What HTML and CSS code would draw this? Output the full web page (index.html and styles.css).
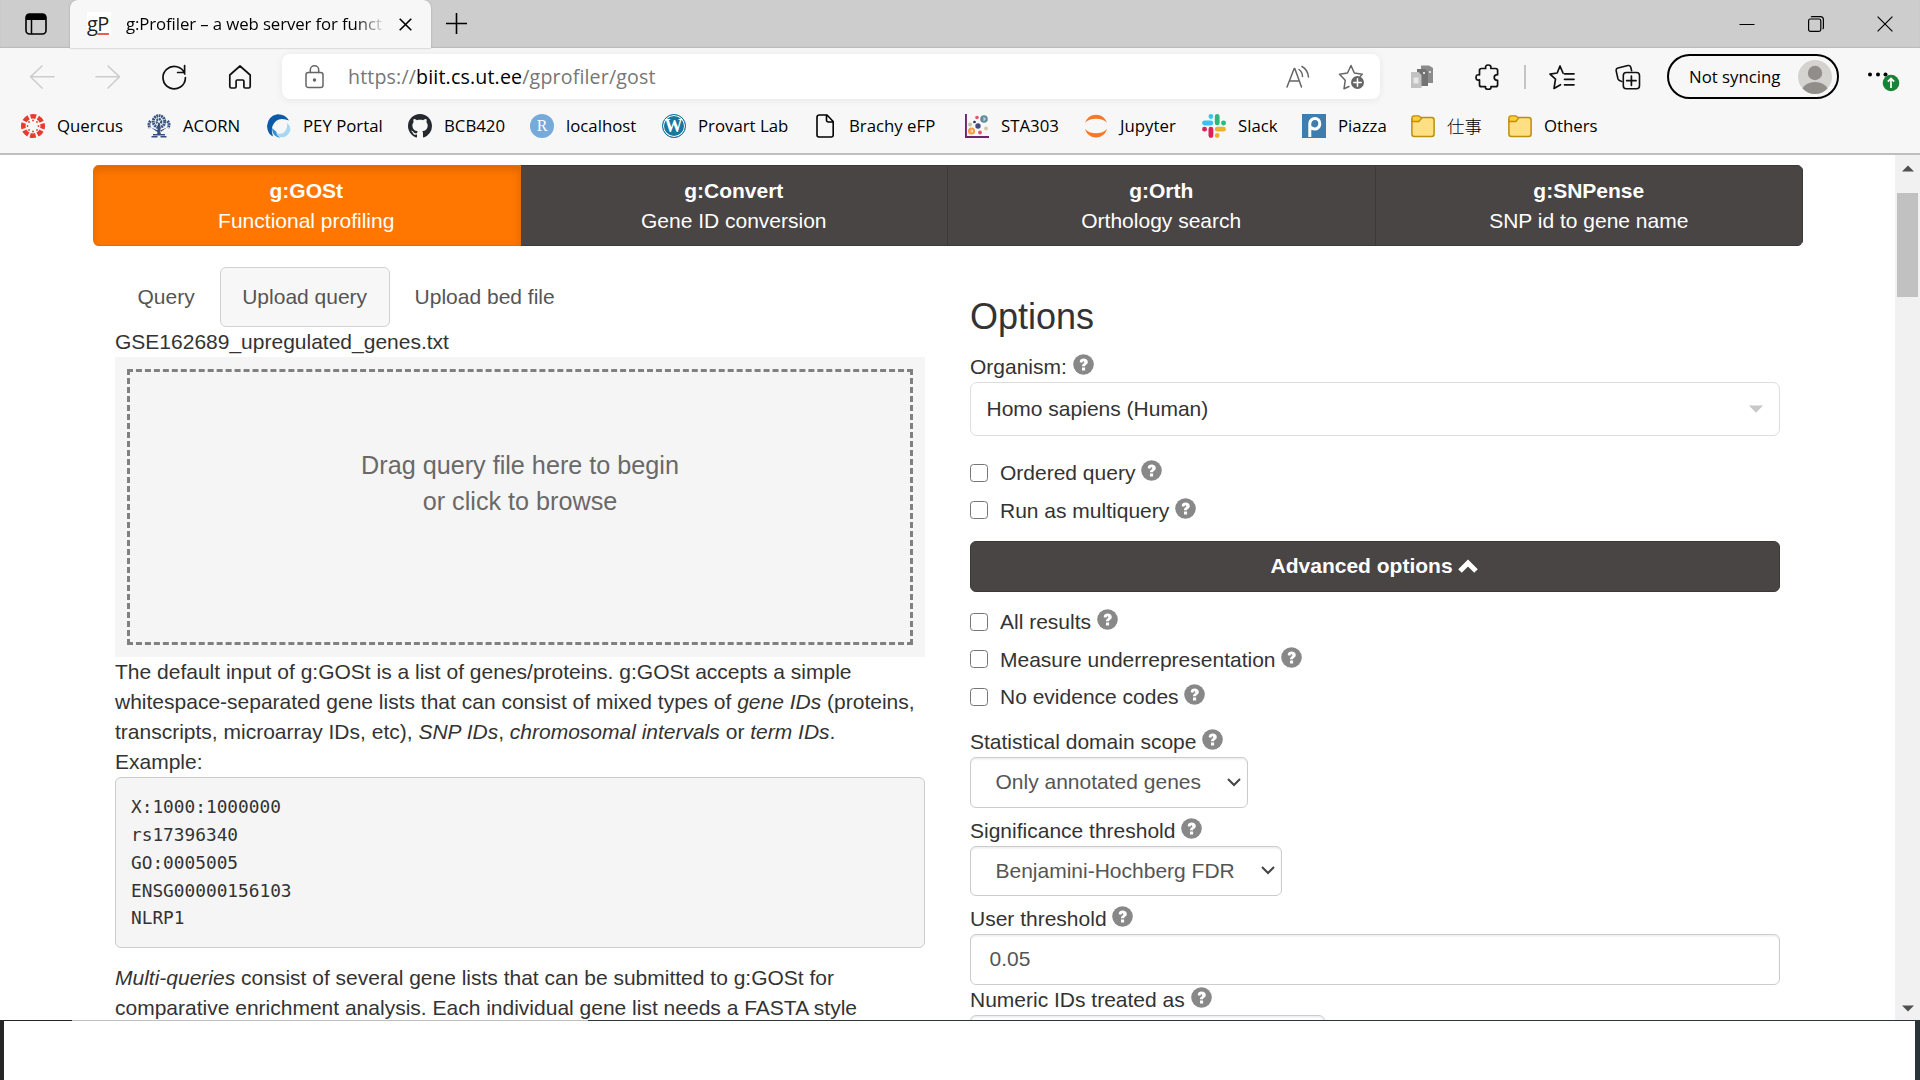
FILE: index.html
```html
<!DOCTYPE html>
<html lang="en">
<head>
<meta charset="utf-8">
<title>g:Profiler</title>
<link rel="stylesheet" href="styles.css">
</head>
<body>
<svg class="defs" width="0" height="0">
  <symbol id="help" viewBox="0 0 21 21">
    <circle cx="10.5" cy="10.5" r="10.3" fill="#888"/>
    <path d="M6.700 8.300C6.700 5.500 8.500 4.500 10.600 4.500c2.400 0 4.200 1.300 4.200 3.500 0 2.700-2.700 2.600-2.800 4.200H9c0-2.700 2.300-2.700 2.300-4 0-1.400-1.900-1.200-1.900.6z" fill="#fff"/>
    <rect x="9" y="13.500" width="3.100" height="3" fill="#fff"/>
  </symbol>
  <symbol id="folder" viewBox="0 0 24 24">
    <rect x=".9" y="3.600" width="22.200" height="18.800" rx="2.500" fill="#ffdf84" stroke="#bb8f0c" stroke-width="1.500"/>
    <path d="M1 7.500V4Q1 1.800 3 1.800h4.800L10.600 4.300 7.800 7.500z" fill="#ffd12e" stroke="#bb8f0c" stroke-width="1.300"/>
  </symbol>
</svg>

<header class="tabstrip">
  <svg class="workspace" viewBox="0 0 22 22"><rect x="1" y="1" width="20" height="20" rx="3.500" fill="none" stroke="#000" stroke-width="1.600"/><path d="M1 7V4Q1 1 4 1h14q3 0 3 3v3z"/><path d="M6.500 6v15" stroke="#000" stroke-width="1.500"/></svg>
  <div class="tab">
    <span class="gp">g<u>P</u></span>
    <span class="tab-title">g:Profiler – a web server for funct</span>
    <svg width="13" height="13" viewBox="0 0 13 13"><path d="M.7.7l11.600 11.600M12.300.7L.7 12.300" stroke="#000" stroke-width="1.600"/></svg>
  </div>
  <svg class="newtab" viewBox="0 0 21 21"><path d="M10.500 0v21M0 10.500h21" stroke="#000" stroke-width="1.600"/></svg>
  <div class="win">
    <svg viewBox="0 0 16 16"><path d="M.5 8.500h15" stroke="#000"/></svg>
    <svg viewBox="0 0 16 16"><rect x=".6" y="3" width="12.200" height="12.300" rx="1.800" fill="none" stroke="#000" stroke-width="1.200"/><path d="M3 1.200q.5-.6 1.300-.6H12.400q3 0 3 3v8q0 1-.7 1.400" fill="none" stroke="#000" stroke-width="1.200"/></svg>
    <svg viewBox="0 0 16 16"><path d="M.6.6l14.800 14.800M15.400.6L.6 15.400" stroke="#000" stroke-width="1.200"/></svg>
  </div>
</header>

<div class="toolbar">
  <svg class="ico faint" viewBox="0 0 26 26"><path d="M25 12.800H2M13 2L1.500 12.800 13 24"/></svg>
  <svg class="ico faint" viewBox="0 0 26 26"><path d="M1 12.800h23M13 2l11.500 10.800L13 24"/></svg>
  <svg class="ico" viewBox="0 0 26 26"><path d="M23.800 10A11.200 11.200 0 1 0 24.400 13.500M23.600 1.500v7h-7" stroke-width="1.700"/></svg>
  <svg class="ico" viewBox="0 0 26 26"><path d="M2.800 11L13 2l10.200 9v11.500q0 1.500-1.500 1.500h-3.500q-1.300 0-1.300-1.300v-5.500q0-1.200-1.200-1.200h-5.400q-1.200 0-1.200 1.200v5.500q0 1.300-1.300 1.300H4.300q-1.500 0-1.500-1.500z" stroke-width="1.700"/></svg>
  <div class="url">
    <svg class="lock" viewBox="0 0 19 24"><rect x="1" y="7.500" width="17" height="15" rx="2.300"/><path d="M5.300 7.500V5a4.200 4.200 0 0 1 8.400 0v2.500"/><circle cx="9.500" cy="15" r="1" fill="#666"/></svg>
    <span class="addr">https://<b>biit.cs.ut.ee</b>/gprofiler/gost</span>
    <svg class="read" viewBox="0 0 24 24"><path d="M1 22L8.200 3.500h.6L15.500 22M3.600 16h9.700M13 4.500q3.500 2.500 3.500 7M16 1.500q6 3.500 6.500 10.500"/></svg>
    <svg class="fav" viewBox="0 0 26 26"><path d="M11 22.500l-5 2.300 1.200-8.500L1.500 10.200l8-1.200L13 1.500 16.300 9l8 1.200-2 2"/><circle cx="19.500" cy="18.500" r="6.500" fill="#666" stroke="none"/><path d="M19.500 14.800v7.400M15.800 18.500h7.400" stroke="#fff" stroke-width="1.500"/></svg>
  </div>
  <svg class="ico mid" viewBox="0 0 26 26"><g stroke="none"><path d="M12 1.500h8l4 2.500v15H12z" fill="#8b8b8b"/><path d="M8 5h8l3 3v14H8z" fill="#737373"/><path d="M2 8h7.500l3 3v13H2z" fill="#c2c2c2"/><path d="M4.500 13.500h5v6h-5z" fill="#e7e7e7"/><path d="M14 8h2v2h-2zM20 7h2v2h-2z" fill="#ddd"/></g></svg>
  <svg class="ico mid" viewBox="0 0 26 26"><path d="M6.500 4.500h4.200q-.8-3.500 2.500-3.500t2.600 3.500h4.800q2 0 2 2v4.200q-3.400 0-3.400 2.800t3.400 2.900v4.300q0 2-2 2h-4.700q.7 2.600-2.700 2.600t-2.600-2.600H6.500q-2 0-2-2v-4.800q-3.500 1-3.500-2.400t3.500-2.600V6.500q0-2 2-2z" stroke-width="1.700"/></svg>
  <i class="sep"></i>
  <svg class="ico mid" viewBox="0 0 26 26"><path d="M14 9L11 2 8.200 9 1 10.200l5.500 5L5 24.500l6.500-3.800M15.500 9.800H25M15.500 15.300H25M15.500 20.800H25" stroke-width="1.700"/></svg>
  <svg class="ico mid" viewBox="0 0 26 26"><path d="M6.800 17.500q-3.300-.8-3.800-2.500L1.200 7q-.5-2.300 1.700-2.900L13 1.500q2.200-.4 2.800 1.700l.8 3.500"/><rect x="8.300" y="8.500" width="16.200" height="16.300" rx="3"/><path d="M16.400 12v9.300M11.700 16.700H21" stroke-width="1.700"/></svg>
  <div class="profile"><span>Not syncing</span><svg viewBox="0 0 34 34"><circle cx="17" cy="17" r="17" fill="#d5d3d0"/><circle cx="17" cy="13" r="7.200" fill="#918d89"/><path d="M4.500 28.500Q8 22 17 22t12.500 6.500Q24 34 17 34T4.500 28.500z" fill="#918d89"/></svg></div>
  <svg class="more" viewBox="0 0 34 30"><g><circle cx="3" cy="7.500" r="2"/><circle cx="11" cy="7.500" r="2"/><circle cx="18.500" cy="7.500" r="2"/></g><circle cx="24" cy="16" r="8.300" fill="#168437"/><path d="M24 21v-9M20.800 14.700l3.200-3.200 3.200 3.200" fill="none" stroke="#fff" stroke-width="1.700"/></svg>
</div>

<nav class="bookmarks">
  <a><svg viewBox="0 0 24 24"><circle cx="12" cy="12" r="9.700" fill="none" stroke="#e63b2e" stroke-width="4.600" stroke-dasharray="5.600 2.018" stroke-dashoffset="2.800"/><g fill="#e63b2e"><circle cx="12" cy="6.500" r=".9"/><circle cx="12" cy="17.500" r=".9"/><circle cx="6.500" cy="12" r=".9"/><circle cx="17.500" cy="12" r=".9"/><circle cx="8" cy="8" r=".9"/><circle cx="16" cy="8" r=".9"/><circle cx="8" cy="16" r=".9"/><circle cx="16" cy="16" r=".9"/></g></svg>Quercus</a>
  <a><svg viewBox="0 0 24 24"><g fill="none" stroke="#36517f" stroke-dasharray="1.800 .6"><circle cx="12" cy="7.500" r="2.300" stroke-width="2.200"/><circle cx="12" cy="7.500" r="5.800" stroke-width="3"/><path d="M3.500 7Q.8 10 3 14M20.500 7Q23.200 10 21 14" stroke-width="3"/></g><path d="M11 10h2l.8 10h-3.600zM4 13.500l7 3v2zM20 13.500l-7 3v2z" fill="#36517f"/><path d="M6 20.700h12M4.500 22.800h6M13.500 22.800h6" stroke="#36517f" stroke-width="1.500"/></svg>ACORN</a>
  <a><svg viewBox="0 0 24 24"><path d="M22 6.500Q18 0 10.500.3 1 2 0 12q.5 8 6 10.500Q4 16 5.500 12 8.500 5 15 5q3.500 0 7 1.500z" fill="#0d5aa9"/><path d="M5 14q0 9 9 10-4-2-4.500-6z" fill="#2f8fd0"/><path d="M9 19q6.500 2.500 9.500-2.500 2.500-4 1.500-8 4.500 4.500 3 9-3 6-8.500 5.800-4-.5-5.500-4.300z" fill="#a5d8f5"/></svg>PEY Portal</a>
  <a><svg viewBox="0 0 16 16"><path fill="#24292f" d="M8 0C3.580 0 0 3.580 0 8c0 3.540 2.290 6.530 5.470 7.590.4.070.55-.17.55-.38 0-.19-.01-.82-.01-1.490-2.010.37-2.530-.49-2.690-.94-.09-.23-.48-.94-.82-1.130-.28-.15-.68-.52-.01-.53.63-.01 1.080.58 1.230.82.72 1.210 1.870.87 2.330.66.07-.52.280-.87.510-1.070-1.780-.2-3.640-.89-3.640-3.950 0-.87.310-1.590.82-2.150-.08-.2-.36-1.020.08-2.120 0 0 .67-.21 2.200.82.640-.18 1.320-.27 2-.27s1.360.09 2 .27c1.530-1.040 2.200-.82 2.200-.82.440 1.100.16 1.920.08 2.120.51.560.82 1.270.82 2.150 0 3.070-1.870 3.750-3.650 3.950.29.250.54.730.54 1.480 0 1.070-.01 1.930-.01 2.200 0 .21.150.46.55.38A8.010 8.010 0 0 0 16 8c0-4.420-3.580-8-8-8z"/></svg>BCB420</a>
  <a><span class="rlogo">R</span>localhost</a>
  <a><span class="wp">W</span>Provart Lab</a>
  <a><svg viewBox="0 0 24 24"><path d="M6.500 1h7.500l6.200 6.500V21q0 2-2 2H6q-2 0-2-2V3.200Q4 1 6.500 1zM13.500 1v5q0 2 2 2h4.700" fill="none" stroke="#000" stroke-width="1.600"/></svg>Brachy eFP</a>
  <a><svg viewBox="0 0 24 24"><path d="M.9 0v23.100H24" fill="none" stroke="#6c246d" stroke-width="2"/><circle cx="19" cy="5" r="3.800" fill="#638c98"/><circle cx="6.500" cy="17" r="3.600" fill="#f39b45"/><circle cx="12" cy="3.500" r="1.800" fill="#d9596d"/><circle cx="13" cy="12" r="2.700" fill="#444b84"/><circle cx="9.500" cy="8" r="1.300" fill="#28285d"/><circle cx="5" cy="10.500" r="2" fill="#bdc9a3"/><circle cx="15" cy="18.500" r="1.900" fill="#d9596d"/><circle cx="21" cy="14.500" r="1.900" fill="#d7c6a2"/><path d="M18 4h2v2h-2M5.500 16h2v2h-2" fill="none" stroke="#fff" stroke-width=".7"/></svg>STA303</a>
  <a><svg viewBox="0 0 24 24"><path d="M.8 9Q4 .7 12 .7T23.200 9Q19 4.800 12 4.800T.8 9zM.8 15Q4 23.500 12 23.500T23.200 15Q19 19.200 12 19.200T.8 15z" fill="#f6792a"/></svg>Jupyter</a>
  <a><svg viewBox="0 0 24 24"><g stroke-width="4.800" stroke-linecap="round"><path d="M2.500 9h6.400M8.900 2.500v.1" stroke="#36c5f0"/><path d="M15.200 2.500v6.400M21.500 9h.1" stroke="#2eb67d"/><path d="M15.200 15.200h6.300M15.200 21.500v.1" stroke="#ecb22e"/><path d="M8.900 15.200v6.300M2.500 15.200h.1" stroke="#e01e5a"/></g></svg>Slack</a>
  <a><svg viewBox="0 0 24 24"><path d="M0 0h24v24H0z" fill="#3f7dae"/><path d="M7.800 23V9.500A5 5.300 0 1 1 12.600 15Q10 15 8.500 13" fill="none" stroke="#fff" stroke-width="3"/></svg>Piazza</a>
  <a><svg viewBox="0 0 24 24"><use href="#folder"/></svg><span class="cjk">仕事</span></a>
  <a><svg viewBox="0 0 24 24"><use href="#folder"/></svg>Others</a>
</nav>

<main class="viewport">
  <div class="page">
    <nav class="tools">
      <a class="on"><b>g:GOSt</b>Functional profiling</a>
      <a><b>g:Convert</b>Gene ID conversion</a>
      <a><b>g:Orth</b>Orthology search</a>
      <a><b>g:SNPense</b>SNP id to gene name</a>
    </nav>
    <div class="cols">
      <section class="left">
        <div class="pills"><a>Query</a><a class="on">Upload query</a><a>Upload bed file</a></div>
        <div>GSE162689_upregulated_genes.txt</div>
        <div class="drop">Drag query file here to begin<br>or click to browse</div>
        <p>The default input of g:GOSt is a list of genes/proteins. g:GOSt accepts a simple<br>whitespace-separated gene lists that can consist of mixed types of <i>gene IDs</i> (proteins,<br>transcripts, microarray IDs, etc), <i>SNP IDs</i>, <i>chromosomal intervals</i> or <i>term IDs</i>.<br>Example:</p>
        <pre>X:1000:1000000
rs17396340
GO:0005005
ENSG00000156103
NLRP1</pre>
        <p><i>Multi-queries</i> consist of several gene lists that can be submitted to g:GOSt for<br>comparative enrichment analysis. Each individual gene list needs a FASTA style</p>
      </section>
      <section class="right">
        <h3>Options</h3>
        <div class="label">Organism: <svg class="help"><use href="#help"/></svg></div>
        <div class="combo">Homo sapiens (Human)<svg width="14" height="8" viewBox="0 0 14 8"><path d="M0 .5h14L7 7.800z" fill="#c8c8c8"/></svg></div>
        <div class="check"><i></i><span>Ordered query <svg class="help"><use href="#help"/></svg></span></div>
        <div class="check"><i></i><span>Run as multiquery <svg class="help"><use href="#help"/></svg></span></div>
        <div class="advanced">Advanced options <svg width="20" height="14" viewBox="0 0 20 14"><path d="M2 12l8-8 8 8" fill="none" stroke="#fff" stroke-width="5"/></svg></div>
        <div class="check"><i></i><span>All results <svg class="help"><use href="#help"/></svg></span></div>
        <div class="check"><i></i><span>Measure underrepresentation <svg class="help"><use href="#help"/></svg></span></div>
        <div class="check"><i></i><span>No evidence codes <svg class="help"><use href="#help"/></svg></span></div>
        <div class="label gap first">Statistical domain scope <svg class="help"><use href="#help"/></svg></div>
        <div class="field select scope">Only annotated genes<svg width="14" height="9" viewBox="0 0 14 9"><path d="M1 1l6 6 6-6" fill="none" stroke="#444" stroke-width="2"/></svg></div>
        <div class="label gap">Significance threshold <svg class="help"><use href="#help"/></svg></div>
        <div class="field select signif">Benjamini-Hochberg FDR<svg width="14" height="9" viewBox="0 0 14 9"><path d="M1 1l6 6 6-6" fill="none" stroke="#444" stroke-width="2"/></svg></div>
        <div class="label gap">User threshold <svg class="help"><use href="#help"/></svg></div>
        <div class="field">0.05</div>
        <div class="label">Numeric IDs treated as <svg class="help"><use href="#help"/></svg></div>
        <div class="field numeric"></div>
      </section>
    </div>
  </div>
  <div class="scroll">
    <svg width="12" height="7" viewBox="0 0 12 7"><path d="M0 6.500L6 .5l6 6z" fill="#505050"/></svg>
    <div class="thumb"></div>
    <svg class="down" width="12" height="7" viewBox="0 0 12 7"><path d="M0 .5l6 6 6-6z" fill="#505050"/></svg>
  </div>
</main>
<footer class="under"></footer>
</body>
</html>
```
FILE: styles.css
```css
* { box-sizing: border-box; }
body {
  margin: 0; width: 1920px; height: 1080px; overflow: hidden; background: #fff;
  font: 16.8px/24px "Open Sans", "Noto Sans CJK JP", sans-serif; color: #000;
}
.defs { position: absolute; }
svg { flex: none; }

.tabstrip { display: flex; align-items: center; height: 48px; padding-left: 25px; background: #cdcdcd; box-shadow: inset 0 -1px 1px #bbb; }
.workspace { width: 22px; height: 22px; }
.tab { display: flex; align-items: center; width: 361px; height: 48px; margin-left: 23px; padding-left: 17px; background: #f7f7f7; border-radius: 8px 8px 0 0; box-shadow: 0 0 2px #999; }
.gp { width: 24px; height: 24px; background: #fff; font: 500 20px/23px "Open Sans", sans-serif; letter-spacing: -.5px; color: #222; }
.gp u { text-decoration: underline #e8604c 2px; text-underline-offset: 2px; }
.tab-title { width: 260px; margin: 0 13px 0 15px; overflow: hidden; white-space: nowrap; letter-spacing: -.1px; -webkit-mask-image: linear-gradient(90deg, #000 88%, transparent); mask-image: linear-gradient(90deg, #000 88%, transparent); }
.newtab { width: 21px; height: 21px; margin-left: 15px; margin-bottom: 1px; }
.win { display: flex; gap: 53px; margin-left: auto; margin-right: 27px; margin-bottom: 1px; }
.win svg { width: 16px; height: 16px; }

.toolbar {
  display: grid; grid-template-columns: repeat(4, 66px) 9px 1098px 9px 66px 66px 8px 66px 66px 6px 172px 81px;
  align-items: center; justify-items: center; height: 56px; padding: 1px 0 0 9px; background: #f7f7f7;
}
.ico { width: 26px; height: 26px; fill: none; stroke: #111; stroke-width: 1.6; stroke-linejoin: round; stroke-linecap: round; }
.faint { stroke: #cdcdcd; }
.url { grid-column: 6; display: flex; align-items: center; width: 100%; height: 45px; padding: 0 16px 0 24px; border-radius: 8px; background: #fff; box-shadow: 0 1px 8px rgba(0,0,0,.07); }
.url svg { fill: none; stroke: #666; stroke-width: 1.5; stroke-linejoin: round; stroke-linecap: round; }
.url .lock { width: 19px; height: 24px; margin-left: -1px; }
.addr { flex: 1; margin-left: 24px; font-size: 19.6px; letter-spacing: .16px; color: #767676; white-space: nowrap; }
.addr b { font-weight: 400; color: #000; }
.read { width: 24px; height: 24px; }
.fav { width: 26px; height: 26px; margin-left: 28px; }
.url + .mid { grid-column: 8; }
.sep { width: 2px; height: 24px; background: #c4c4c4; }
.profile { grid-column: 14; display: flex; align-items: center; justify-content: space-between; width: 172px; height: 45px; padding: 0 5px 0 20px; border: 2px solid #000; border-radius: 23px; }
.profile span { white-space: nowrap; padding-top: 1px; }
.profile svg { width: 34px; height: 34px; }
.more { width: 34px; height: 30px; margin: 11px 0 0 8px; }

.bookmarks {
  display: grid; grid-template-columns: 126px 120px 141px 122px 132px 151px 152px 119px 118px 100px 109px 97px 100px;
  height: 51px; padding: 10px 0 0 21px; background: #f7f7f7; border-bottom: 2px solid #bfbfbf;
}
.bookmarks a { display: flex; gap: 12px; height: 24px; white-space: nowrap; }
.bookmarks svg { width: 24px; height: 24px; }
.cjk { font-size: 17.4px; font-weight: 300; }
.rlogo, .wp { flex: none; width: 24px; height: 24px; border-radius: 50%; text-align: center; color: #fff; background: #75aadb; font: 16px/24px "Liberation Serif", serif; }
.wp { border: 1px solid #1a759f; box-shadow: inset 0 0 0 1px #fff; background: #1a759f; font: bold 18px/22px "Liberation Serif", serif; text-indent: -1px; }

.viewport { display: flex; height: 865px; overflow: hidden; font: 21px/30px "Liberation Sans", Arial, sans-serif; color: #333; }
.page { width: 1895px; padding: 10px 92px 0 93px; white-space: nowrap; }
.tools { display: flex; height: 81px; border-radius: 6px; overflow: hidden; }
.tools a { flex: 1; padding-top: 10px; text-align: center; color: #fff; background: #4a4545; border: solid #3c3939; border-width: 1px 1px 1px 0; }
.tools b { display: block; }
.tools .on { background: #f70; border-color: #e86c00; box-shadow: inset 0 4px 8px rgba(0,0,0,.14); }
.cols { display: flex; gap: 45px; padding: 21px 22px 0; }
.left, .right { width: 810px; }
.pills { display: flex; gap: 2.5px; }
.pills a { padding: 15px 21.5px; height: 60px; color: #555; border: 1px solid transparent; line-height: 28px; }
.pills .on { border: 1px solid #d2d2d2; border-radius: 6px; background: #f7f7f7; }
.drop { height: 300px; padding-top: 90px; background: #f5f5f5; outline: 3px dashed #808080; outline-offset: -15px; text-align: center; font-size: 25.2px; line-height: 36px; color: #696969; }
p { margin: 0; }
pre { height: 171px; margin: 0 0 15px; padding: 15px 15px 0; border: 1px solid #ccc; border-radius: 6px; background: #f5f5f5; font: 17.8px/27.86px "DejaVu Sans Mono", monospace; }
h3 { margin: 30px 0 15px; font-weight: 400; font-size: 36px; line-height: 40px; }
.help { width: 21px; height: 21px; vertical-align: -1.4px; }
.combo { display: flex; align-items: center; justify-content: space-between; height: 54px; padding: 0 16px 0 15.5px; margin-bottom: 20px; border: 1px solid #ddd; border-radius: 7px; }
.check { display: flex; gap: 12px; height: 37.5px; padding-top: 2px; }
.check i { width: 18px; height: 18px; margin-top: 5.5px; border: 1.5px solid #767676; border-radius: 3.5px; }
.advanced { height: 51px; margin: 10px 0 13px; padding-right: 1px; border: 1px solid #3c3939; border-radius: 6px; background: #4a4545; color: #fff; font-weight: 700; text-align: center; line-height: 47px; }
.gap { margin-top: 8px; }
.gap.first { margin-top: 9.5px; }
.field { height: 50.5px; padding-left: 18.5px; border: 1px solid #ccc; border-radius: 6px; box-shadow: inset 0 1.5px 1.5px rgba(0,0,0,.075); line-height: 48px; color: #555; }
.select { display: flex; align-items: center; justify-content: space-between; padding: 0 6px 0 24.5px; }
.scope { width: 278px; }
.signif { width: 312px; }
.numeric { width: 355px; }
.scroll { width: 25px; padding: 10px 2px 0; background: #f1f1f1; display: flex; flex-direction: column; align-items: center; }
.thumb { width: 21px; height: 104px; margin-top: 21px; background: #c1c1c1; }
.down { margin-top: auto; margin-bottom: 8px; }
.under { height: 60px; border: solid #2b3537; border-width: 0 5px 0 4px; border-left-color: #262626; background: linear-gradient(90deg, #222 68px, #c0c0c0 68px 584px, #2b3537 584px) 0 0 / 100% 1px no-repeat #fff; }
```
